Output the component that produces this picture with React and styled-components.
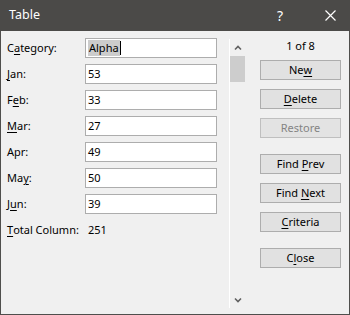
import React from "react";
import styled, { createGlobalStyle } from "styled-components";

const Global = createGlobalStyle`
  html, body { margin: 0; padding: 0; background: #f0f0f0; }
  * { box-sizing: border-box; }
`;

const Window = styled.div`
  width: 350px;
  height: 315px;
  display: flex;
  flex-direction: column;
  background: #f0f0f0;
  border: 1px solid #4f4e4c;
  border-top: none;
  font-family: "Noto Sans", "Liberation Sans", sans-serif;
  font-size: 11px;
  line-height: 14px;
  color: #000;
`;

const TitleBar = styled.div`
  height: 31px;
  margin: 0 -1px;
  background: #4b4a48;
  color: #fff;
  display: flex;
  align-items: center;
  padding-left: 9px;
  font-size: 12.5px;
`;

const Title = styled.div`
  flex: 1;
  padding-bottom: 1px;
`;

const HelpButton = styled.div`
  width: 46px;
  display: flex;
  justify-content: center;
  font-size: 14px;
  margin-right: 1px;
`;

const CloseButton = styled.div`
  width: 46px;
  display: flex;
  justify-content: center;
  padding-left: 6px;
`;

const Body = styled.div`
  flex: 1;
  display: flex;
  min-height: 0;
`;

const Form = styled.div`
  width: 228px;
  padding: 7px 0 0 6px;
  display: grid;
  grid-template-columns: 78px 132px;
  grid-auto-rows: 20px;
  row-gap: 6px;
  align-content: start;
`;

const Label = styled.div`
  display: flex;
  align-items: center;
  white-space: pre;
`;

const Key = styled.span`
  text-decoration: underline;
  text-underline-offset: 2px;
`;

const Field = styled.div`
  border: 1px solid #adadad;
  background: #fff;
  display: flex;
  align-items: center;
  padding-left: 2px;
`;

const Selected = styled.span`
  background: #cccccc;
  padding: 1px;
`;

const Caret = styled.span`
  width: 1px;
  height: 14px;
  background: #000;
`;

const Value = styled.div`
  display: flex;
  align-items: center;
  padding-left: 3px;
`;

const ScrollBar = styled.div`
  width: 17px;
  margin: 8px 0 6px 0;
  border-left: 1px solid #ffffff;
  display: flex;
  flex-direction: column;
  align-items: center;
`;

const Arrow = styled.div`
  height: 17px;
  display: flex;
  align-items: center;
  justify-content: center;
  width: 100%;
`;

const Thumb = styled.div`
  width: 15px;
  height: 26px;
  margin-left: -1px;
  background: #cdcdcd;
`;

const Track = styled.div`
  flex: 1;
`;

const Side = styled.div`
  flex: 1;
  padding: 7px 0 0 14px;
  display: flex;
  flex-direction: column;
`;

const Counter = styled.div`
  width: 81px;
  height: 16px;
  display: flex;
  align-items: center;
  justify-content: center;
  margin-bottom: 6px;
`;

const Group = styled.div`
  display: flex;
  flex-direction: column;
  gap: 9px;
  margin-bottom: ${(p) => p.$after || 0}px;
`;

const Button = styled.div`
  width: 81px;
  height: 20px;
  flex: none;
  border: 1px solid ${(p) => (p.$disabled ? "#bfbfbf" : "#adadad")};
  background: ${(p) => (p.$disabled ? "#e3e3e3" : "#e1e1e1")};
  color: ${(p) => (p.$disabled ? "#838383" : "#000")};
  display: flex;
  align-items: center;
  justify-content: center;
  white-space: pre;
`;

const Chevron = ({ down }) => (
  <svg width="8" height="6" viewBox="0 0 8 6">
    <path
      d={down ? "M1 1.5 L4 4.5 L7 1.5" : "M1 4.5 L4 1.5 L7 4.5"}
      fill="none"
      stroke="#606060"
      strokeWidth="1.6"
    />
  </svg>
);

function Lbl({ pre, k, post }) {
  return (
    <Label>
      {pre}
      {k && <Key>{k}</Key>}
      {post}
    </Label>
  );
}

export default function App() {
  const fields = [
    { pre: "", k: "J", post: "an:", v: "53" },
    { pre: "F", k: "e", post: "b:", v: "33" },
    { pre: "", k: "M", post: "ar:", v: "27" },
    { pre: "Apr:", k: "", post: "", v: "49" },
    { pre: "Ma", k: "y", post: ":", v: "50" },
    { pre: "J", k: "u", post: "n:", v: "39" },
  ];
  return (
    <>
      <Global />
      <Window>
        <TitleBar>
          <Title>Table</Title>
          <HelpButton>?</HelpButton>
          <CloseButton>
            <svg width="11" height="11" viewBox="0 0 11 11">
              <path d="M0.5 0.5 L10.5 10.5 M10.5 0.5 L0.5 10.5" stroke="#fff" strokeWidth="1.2" />
            </svg>
          </CloseButton>
        </TitleBar>
        <Body>
          <Form>
            <Lbl pre="C" k="a" post="tegory:" />
            <Field>
              <Selected>Alpha</Selected>
              <Caret />
            </Field>
            {fields.map((f, i) => (
              <React.Fragment key={i}>
                <Lbl pre={f.pre} k={f.k} post={f.post} />
                <Field>{f.v}</Field>
              </React.Fragment>
            ))}
            <Lbl pre="" k="T" post="otal Column:" />
            <Value>251</Value>
          </Form>
          <ScrollBar>
            <Arrow>
              <Chevron />
            </Arrow>
            <Thumb />
            <Track />
            <Arrow>
              <Chevron down />
            </Arrow>
          </ScrollBar>
          <Side>
            <Counter>1 of 8</Counter>
            <Group $after={16}>
              <Button>
                Ne<Key>w</Key>
              </Button>
              <Button>
                <Key>D</Key>elete
              </Button>
              <Button $disabled>Restore</Button>
            </Group>
            <Group $after={16}>
              <Button>
                Find <Key>P</Key>rev
              </Button>
              <Button>
                Find <Key>N</Key>ext
              </Button>
              <Button>
                <Key>C</Key>riteria
              </Button>
            </Group>
            <Group>
              <Button>
                C<Key>l</Key>ose
              </Button>
            </Group>
          </Side>
        </Body>
      </Window>
    </>
  );
}
